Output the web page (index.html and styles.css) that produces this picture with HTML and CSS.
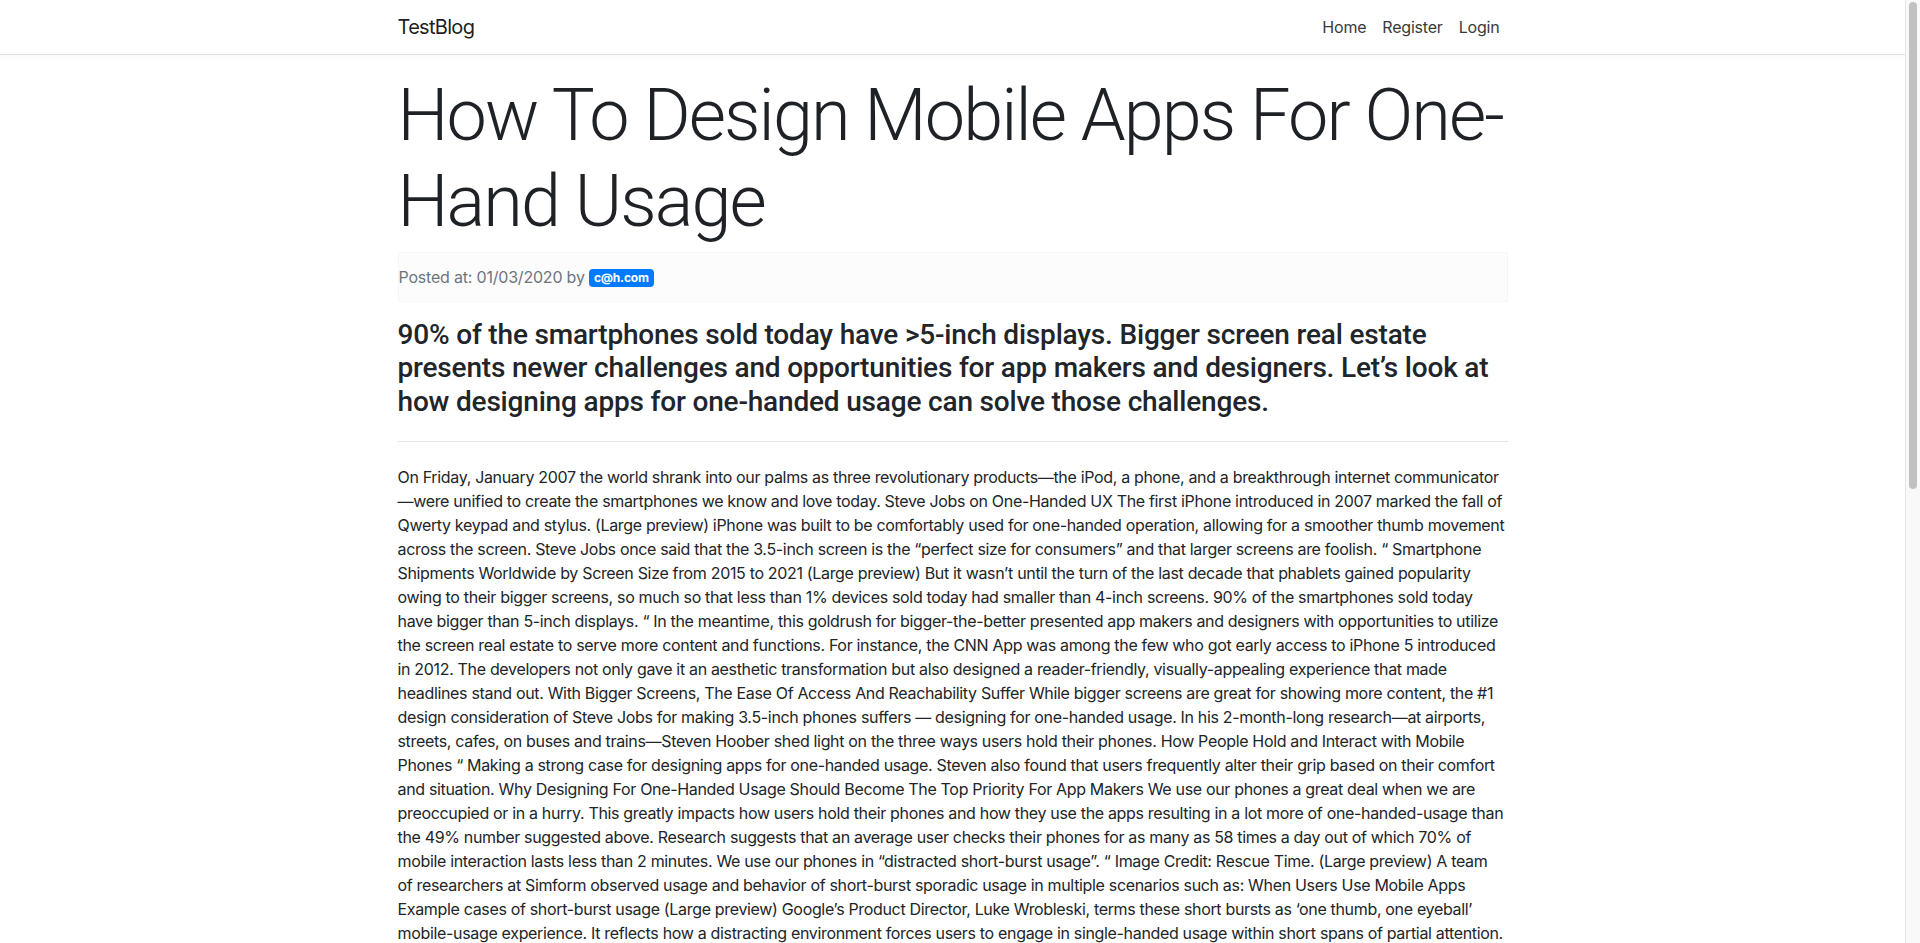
FILE: index.html
```html
<!DOCTYPE html>
<html lang="en">
<head>
<meta charset="utf-8">
<title>TestBlog</title>
<link rel="stylesheet" href="styles.css">
</head>
<body>
<nav class="navbar">
  <div class="container nav-inner">
    <a class="brand" href="#">TestBlog</a>
    <ul class="nav">
      <li><a class="nav-link" href="#">Home</a></li>
      <li><a class="nav-link" href="#">Register</a></li>
      <li><a class="nav-link" href="#">Login</a></li>
    </ul>
  </div>
</nav>
<main class="container">
  <h1 class="title"><span class="ln">How To Design Mobile Apps For One-</span> <span class="ln">Hand Usage</span></h1>
  <div class="meta">Posted at: 01/03/2020 by <span class="badge">c@h.com</span></div>
  <h3 class="lead"><span class="ln">90% of the smartphones sold today have &gt;5-inch displays. Bigger screen real estate</span> <span class="ln">presents newer challenges and opportunities for app makers and designers. Let’s look at</span> <span class="ln">how designing apps for one-handed usage can solve those challenges.</span></h3>
  <hr class="sep">
  <p class="body"><span class="ln">On Friday, January 2007 the world shrank into our palms as three revolutionary products—the iPod, a phone, and a breakthrough internet communicator</span> <span class="ln">—were unified to create the smartphones we know and love today. Steve Jobs on One-Handed UX The first iPhone introduced in 2007 marked the fall of</span> <span class="ln">Qwerty keypad and stylus. (Large preview) iPhone was built to be comfortably used for one-handed operation, allowing for a smoother thumb movement</span> <span class="ln">across the screen. Steve Jobs once said that the 3.5-inch screen is the “perfect size for consumers” and that larger screens are foolish. “ Smartphone</span> <span class="ln">Shipments Worldwide by Screen Size from 2015 to 2021 (Large preview) But it wasn’t until the turn of the last decade that phablets gained popularity</span> <span class="ln">owing to their bigger screens, so much so that less than 1% devices sold today had smaller than 4-inch screens. 90% of the smartphones sold today</span> <span class="ln">have bigger than 5-inch displays. “ In the meantime, this goldrush for bigger-the-better presented app makers and designers with opportunities to utilize</span> <span class="ln">the screen real estate to serve more content and functions. For instance, the CNN App was among the few who got early access to iPhone 5 introduced</span> <span class="ln">in 2012. The developers not only gave it an aesthetic transformation but also designed a reader-friendly, visually-appealing experience that made</span> <span class="ln">headlines stand out. With Bigger Screens, The Ease Of Access And Reachability Suffer While bigger screens are great for showing more content, the #1</span> <span class="ln">design consideration of Steve Jobs for making 3.5-inch phones suffers — designing for one-handed usage. In his 2-month-long research—at airports,</span> <span class="ln">streets, cafes, on buses and trains—Steven Hoober shed light on the three ways users hold their phones. How People Hold and Interact with Mobile</span> <span class="ln">Phones “ Making a strong case for designing apps for one-handed usage. Steven also found that users frequently alter their grip based on their comfort</span> <span class="ln">and situation. Why Designing For One-Handed Usage Should Become The Top Priority For App Makers We use our phones a great deal when we are</span> <span class="ln">preoccupied or in a hurry. This greatly impacts how users hold their phones and how they use the apps resulting in a lot more of one-handed-usage than</span> <span class="ln">the 49% number suggested above. Research suggests that an average user checks their phones for as many as 58 times a day out of which 70% of</span> <span class="ln">mobile interaction lasts less than 2 minutes. We use our phones in “distracted short-burst usage”. “ Image Credit: Rescue Time. (Large preview) A team</span> <span class="ln">of researchers at Simform observed usage and behavior of short-burst sporadic usage in multiple scenarios such as: When Users Use Mobile Apps</span> <span class="ln">Example cases of short-burst usage (Large preview) Google’s Product Director, Luke Wrobleski, terms these short bursts as ‘one thumb, one eyeball’</span> <span class="ln">mobile-usage experience. It reflects how a distracting environment forces users to engage in single-handed usage within short spans of partial attention.</span> Moreover, the Simform study found that 49% of users hold their phones with one hand, 36% cradle them, and only 15% use both hands. Designers should therefore consider the thumb zone when placing the primary actions of an app, making sure that the most frequently used controls fall within comfortable reach. The natural thumb zone covers the lower part of the screen, while the top corners are the hardest to reach. As screens grow, the area that a thumb can cover comfortably shrinks in proportion to the whole display. This is why many apps moved their navigation to the bottom of the screen: tab bars, floating action buttons and bottom sheets all keep the most important controls close to the thumb. Gestures also help: swiping left or right to switch between views, pulling down to refresh and swiping to dismiss are all actions that can be done with one hand anywhere on the screen. Another pattern is to bring content down towards the thumb, as with the reachability feature introduced on iPhone 6, which lowers the top half of the screen on demand. Menus that open from the bottom, search fields placed near the keyboard and large touch targets all reduce the need to shift the grip. Designers should also avoid placing destructive actions in the easy reach area, since accidental taps are more likely there. Testing apps with real users in real situations — walking, commuting, holding a coffee — reveals how much the layout depends on the way people hold their phones. Android and iOS both offer guidelines for touch target sizes, and following them is a good first step. Finally, the best one-handed designs are those in which users do not notice the effort at all: the controls they need are always where the thumb already is, and the content adapts to the way the device is held rather than the other way round. Conclusion: as phones keep getting bigger, designing for one-handed usage is not an afterthought but a core requirement of a good mobile experience, and teams that plan for it early save themselves costly redesigns later on. With thoughtful placement of controls, generous touch targets, and gestures that work anywhere on the screen, apps can remain comfortable to use no matter how large the display becomes, and users can keep their attention on what matters most while on the move. Designing for the thumb is designing for people as they really are: busy, distracted, and often holding something else in their other hand.</p>
</main>
<div class="scrollbar" aria-hidden="true"><div class="scrollbar-thumb"></div></div>
</body>
</html>
```

FILE: styles.css
```css
html {
  background: #fff;
}
body {
  margin: 0 15px 0 0;
  font-family: Inter, "Liberation Sans", sans-serif;
  font-size: 16px;
  line-height: 1.5;
  color: #212529;
  background: #fff;
}
a {
  text-decoration: none;
}
.scrollbar {
  position: fixed;
  top: 0;
  right: 0;
  width: 15px;
  height: 100vh;
  box-sizing: border-box;
  background: #f9f9f9;
  border-left: 1px solid #e6e6e6;
}
.scrollbar-thumb {
  position: absolute;
  top: 2px;
  left: 3px;
  width: 8px;
  height: 487px;
  border-radius: 4px;
  background: #c1c1c1;
}
.container {
  max-width: 1140px;
  margin: 0 auto;
  padding: 0 15px;
  box-sizing: border-box;
}
.navbar {
  height: 54px;
  border-bottom: 1px solid #dee2e6;
  background: #fff;
  box-shadow: 0 2px 6px rgba(0, 0, 0, 0.03);
}
.nav-inner {
  display: flex;
  align-items: center;
  justify-content: space-between;
  height: 100%;
}
.brand {
  font-size: 20px;
  color: rgba(0, 0, 0, 0.9);
  letter-spacing: -0.7px;
}
.nav {
  display: flex;
  list-style: none;
  margin: 0;
  padding: 0;
}
.nav-link {
  display: block;
  padding: 0 8px;
  color: #3a3a3a;
  letter-spacing: -0.2px;
}
.ln {
  white-space: nowrap;
}
.title {
  font-family: Roboto, Inter, sans-serif;
  font-size: 72px;
  font-weight: 300;
  line-height: 1.2;
  margin: 18px 0 6px;
  letter-spacing: -1.9px;
  color: #1e2226;
}
.meta {
  padding: 12px 0;
  background: #fcfcfc;
  border: 1px solid #f6f6f6;
  color: #6c757d;
  letter-spacing: -0.2px;
}
.badge {
  display: inline-block;
  background: #007bff;
  color: #fff;
  font-size: 12px;
  font-weight: 700;
  line-height: 1;
  padding: 3px 5px;
  border-radius: 4px;
  vertical-align: 1px;
}
.lead {
  font-family: Roboto, Inter, sans-serif;
  font-size: 28px;
  font-weight: 500;
  line-height: 1.2;
  margin: 16px 0 22px;
  letter-spacing: -0.18px;
}
.sep {
  border: 0;
  border-top: 1px solid rgba(0, 0, 0, 0.1);
  margin: 0 0 23px;
}
.body {
  margin: 0 0 16px;
  letter-spacing: -0.33px;
}
```
